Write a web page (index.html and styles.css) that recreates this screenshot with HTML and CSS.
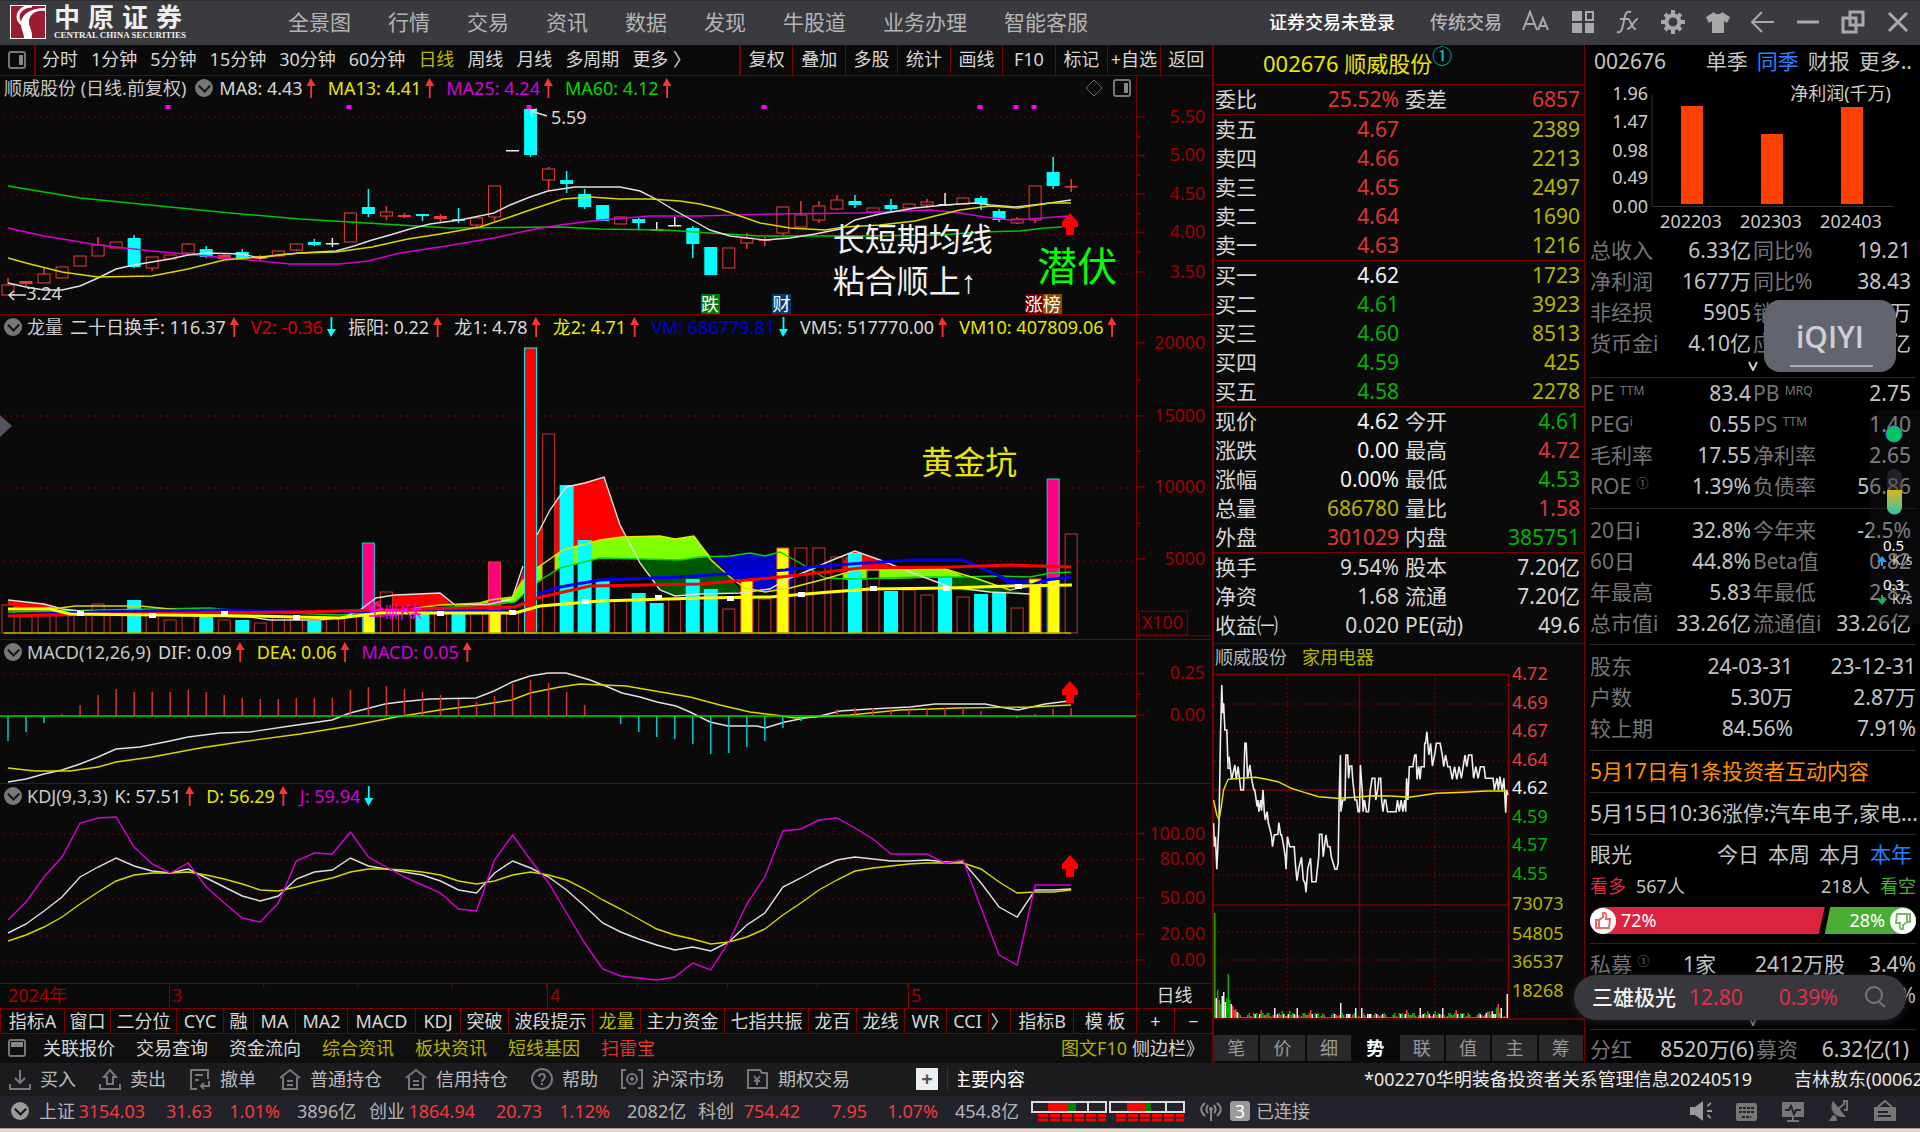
FILE: index.html
```html
<!DOCTYPE html>
<html lang="zh-CN">
<head>
<meta charset="utf-8">
<title>中原证券 - 顺威股份</title>
<link rel="stylesheet" href="styles.css">
</head>
<body>
<header class="titlebar">
  <a class="brand" href="#">
    <svg class="brand-mark" viewBox="0 0 36 34"><rect width="36" height="34" fill="#fff"/><rect x="1" y="1" width="34" height="32" fill="#9b1c2e"/><path d="M35 6C25 5 19 10 19 17c0 6 4 9 3 16h-8c0-5-3-8-3-14C11 10 20 3 35 3z" fill="#fff"/><path d="M22 1C14 1 8 6 8 12c0 4 2 5 4 7" stroke="#fff" stroke-width="3" fill="none"/></svg>
    <span class="brand-text"><span class="brand-cn"><b>中</b><b>原</b><b>证</b><b>券</b></span><span class="brand-en">CENTRAL CHINA SECURITIES</span></span>
  </a>
  <nav class="mainnav">
    <a href="#">全景图</a><a href="#">行情</a><a href="#">交易</a><a href="#">资讯</a><a href="#">数据</a><a href="#">发现</a><a href="#">牛股道</a><a href="#">业务办理</a><a href="#">智能客服</a>
  </nav>
  <div class="login"><a class="on" href="#">证券交易未登录</a><a href="#">传统交易</a></div>
  <div class="tools">
    <button aria-label="字体"><svg viewBox="0 0 28 24"><path d="M1 20L8 2l7 18M3.500 14h9M16 20l5-12 5 12M18 16h6" class="s2"/></svg></button>
    <button aria-label="布局"><svg viewBox="0 0 24 24"><path d="M1 1h10v10H1zM1 13h10v10H1zM14 13h9v10h-9z" class="f"/><path d="M15 2h7v8h-7z" class="s2"/></svg></button>
    <button aria-label="公式"><svg viewBox="0 0 24 24"><path d="M1 22c4 1 5-2 6-7l2-9c1-4 3-5 6-4M4 9h8M12 9c3 0 3 10 8 10M22 9c-4 0-6 10-11 10" class="s2"/></svg></button>
    <button aria-label="设置"><svg viewBox="0 0 24 24"><circle cx="12" cy="12" r="6.500" fill="none" stroke="#a9a9ac" stroke-width="4"/><path d="M12 0v5M12 19v5M0 12h5M19 12h5M4 4l3 3M17 17l3 3M4 20l3-3M17 7l3-3" stroke="#a9a9ac" stroke-width="4"/></svg></button>
    <button aria-label="皮肤"><svg viewBox="0 0 24 24"><path d="M8 2c1 3 7 3 8 0l8 5-3 6-3-2v12H6V11l-3 2-3-6z" class="f"/></svg></button>
    <button aria-label="后退"><svg viewBox="0 0 24 24"><path d="M23 12H2M11 2L1 12l10 10" class="s2"/></svg></button>
    <button aria-label="最小化"><svg viewBox="0 0 24 24"><path d="M1 12h22" class="s3"/></svg></button>
    <button aria-label="还原"><svg viewBox="0 0 24 24"><path d="M9 2h13v13H9zM2 8h13v14H2z" class="s3"/></svg></button>
    <button aria-label="关闭"><svg viewBox="0 0 24 24"><path d="M3 3l18 18M21 3L3 21" class="s3"/></svg></button>
  </div>
</header>

<main class="workspace">
  <section class="charts">
    <div class="periods">
      <button class="dock" aria-label="侧栏"><svg viewBox="0 0 18 18"><rect x="1" y="1" width="16" height="16" rx="2" fill="none" stroke="#777" stroke-width="2"/><rect x="11" y="4" width="4" height="10" fill="#888"/></svg></button>
      <nav class="period-list">
        <a href="#">分时</a><a href="#">1分钟</a><a href="#">5分钟</a><a href="#">15分钟</a><a href="#">30分钟</a><a href="#">60分钟</a><a class="active" href="#">日线</a><a href="#">周线</a><a href="#">月线</a><a href="#">多周期</a><a href="#">更多&nbsp;〉</a>
      </nav>
      <div class="period-tools">
        <button>复权</button><button>叠加</button><button>多股</button><button>统计</button><button>画线</button><button>F10</button><button>标记</button><button>+自选</button><button>返回</button>
      </div>
    </div>

    <section class="pane">
      <div class="legend">
        <span class="name">顺威股份 (日线.前复权)</span><i class="fold"></i>
        <span class="up">MA8: 4.43</span><span class="up y">MA13: 4.41</span><span class="up m">MA25: 4.24</span><span class="up g">MA60: 4.12</span>
        <svg class="pane-tools" viewBox="0 0 46 20"><path d="M8 2l8 8-8 8-8-8z" fill="none" stroke="#666"/><rect x="28" y="2" width="16" height="16" rx="2" fill="none" stroke="#777" stroke-width="2"/><rect x="38" y="5" width="4" height="10" fill="#888"/></svg>
      </div>
      <div class="plot">
        <svg id="price" class="price" viewBox="0 103 1136 211" preserveAspectRatio="none"></svg>
        <span class="note peak">5.59</span><span class="note low">3.24</span>
        <p class="note remark">长短期均线<br>粘合顺上<span class="sign">↑</span></p>
        <span class="note lurk">潜伏</span>
        <span class="badge b1">跌</span><span class="badge b2">财</span><span class="badge b3">涨</span><span class="badge b4">榜</span>
      </div>
      <svg id="price-axis" class="axis" viewBox="1136 77 76 238"></svg>
    </section>

    <section class="pane">
      <div class="legend">
        <i class="fold"></i><span class="name">龙量</span>
        <span class="up">二十日换手: 116.37</span><span class="down r">V2: -0.36</span><span class="up">振阳: 0.22</span><span class="up">龙1: 4.78</span><span class="up y">龙2: 4.71</span><span class="down b">VM: 686779.81</span><span class="up">VM5: 517770.00</span><span class="up y">VM10: 407809.06</span>
      </div>
      <div class="plot">
        <svg id="volume" class="volume" viewBox="0 342 1136 297" preserveAspectRatio="none"></svg>
        <span class="note pit">黄金坑</span>
        <button class="drawer" aria-label="展开"></button>
      </div>
      <svg id="volume-axis" class="axis" viewBox="1136 316 76 324"></svg>
    </section>

    <section class="pane">
      <div class="legend">
        <i class="fold"></i><span class="name">MACD(12,26,9)</span>
        <span class="up">DIF: 0.09</span><span class="up y">DEA: 0.06</span><span class="up m">MACD: 0.05</span>
      </div>
      <div class="plot"><svg id="macd" class="macd" viewBox="0 667 1136 116" preserveAspectRatio="none"></svg></div>
      <svg id="macd-axis" class="axis" viewBox="1136 641 76 143"></svg>
    </section>

    <section class="pane">
      <div class="legend">
        <i class="fold"></i><span class="name">KDJ(9,3,3)</span>
        <span class="up">K: 57.51</span><span class="up y">D: 56.29</span><span class="down m">J: 59.94</span>
      </div>
      <div class="plot"><svg id="kdj" class="kdj" viewBox="0 811 1136 172" preserveAspectRatio="none"></svg></div>
      <svg id="kdj-axis" class="axis" viewBox="1136 785 76 199"></svg>
    </section>

    <div class="dates"><span>2024年</span><span class="ticks">3</span><span class="ticks">4</span><span>5</span><span class="unit">日线</span></div>

    <div class="indicators">
      <button>指标A</button><button>窗口</button><button>二分位</button><button>CYC</button><button>融</button><button>MA</button><button>MA2</button><button>MACD</button><button>KDJ</button><button>突破</button><button>波段提示</button><button class="active">龙量</button><button>主力资金</button><button>七指共振</button><button>龙百</button><button>龙线</button><button>WR</button><button>CCI</button><button>〉</button><button>指标B</button><button>模 板</button><button>+</button><button>−</button>
    </div>

    <nav class="links">
      <svg viewBox="0 0 18 18"><rect x="1" y="1" width="16" height="16" rx="2" fill="none" stroke="#777" stroke-width="2"/><rect x="3" y="3" width="12" height="5" fill="#888"/></svg>
      <a href="#">关联报价</a><a href="#">交易查询</a><a href="#">资金流向</a><a class="olive" href="#">综合资讯</a><a class="olive" href="#">板块资讯</a><a class="olive" href="#">短线基因</a><a class="warn" href="#">扫雷宝</a>
      <span class="links-end"><a class="olive" href="#">图文F10</a><a href="#">侧边栏》</a></span>
    </nav>
  </section>

  <section class="quote">
    <h1>002676 顺威股份<sup>①</sup></h1>
    <table><tr><th>委比</th><td class="r">25.52%</td><th>委差</th><td class="r">6857</td></tr></table>
    <table>
      <tr><th>卖五</th><td class="r">4.67</td><th></th><td class="o">2389</td></tr>
      <tr><th>卖四</th><td class="r">4.66</td><th></th><td class="o">2213</td></tr>
      <tr><th>卖三</th><td class="r">4.65</td><th></th><td class="o">2497</td></tr>
      <tr><th>卖二</th><td class="r">4.64</td><th></th><td class="o">1690</td></tr>
      <tr><th>卖一</th><td class="r">4.63</td><th></th><td class="o">1216</td></tr>
    </table>
    <table>
      <tr><th>买一</th><td class="w">4.62</td><th></th><td class="o">1723</td></tr>
      <tr><th>买二</th><td class="g">4.61</td><th></th><td class="o">3923</td></tr>
      <tr><th>买三</th><td class="g">4.60</td><th></th><td class="o">8513</td></tr>
      <tr><th>买四</th><td class="g">4.59</td><th></th><td class="o">425</td></tr>
      <tr><th>买五</th><td class="g">4.58</td><th></th><td class="o">2278</td></tr>
    </table>
    <table>
      <tr><th>现价</th><td class="w">4.62</td><th>今开</th><td class="g">4.61</td></tr>
      <tr><th>涨跌</th><td class="w">0.00</td><th>最高</th><td class="r">4.72</td></tr>
      <tr><th>涨幅</th><td class="w">0.00%</td><th>最低</th><td class="g">4.53</td></tr>
      <tr><th>总量</th><td class="o">686780</td><th>量比</th><td class="r">1.58</td></tr>
      <tr><th>外盘</th><td class="r">301029</td><th>内盘</th><td class="g">385751</td></tr>
    </table>
    <table class="last">
      <tr><th>换手</th><td>9.54%</td><th>股本</th><td>7.20亿</td></tr>
      <tr><th>净资</th><td>1.68</td><th>流通</th><td>7.20亿</td></tr>
      <tr><th>收益㈠</th><td>0.020</td><th>PE(动)</th><td>49.6</td></tr>
    </table>
    <div class="mini-title"><span>顺威股份</span><a href="#">家用电器</a></div>
    <svg id="mini" class="mini" viewBox="1214 674 370 346"></svg>
    <div class="mini-tabs">
      <button>笔</button><button>价</button><button>细</button><button class="active">势</button><button>联</button><button>值</button><button>主</button><button>筹</button>
    </div>
  </section>

  <aside class="fund">
    <div class="fund-head"><span>002676</span><a href="#">单季</a><a class="active" href="#">同季</a><a href="#">财报</a><a href="#">更多..</a></div>
    <svg id="profit" class="profit" viewBox="1585 79 335 156"></svg>
    <div class="block first">
      <dl><dt>总收入</dt><dd>6.33亿</dd><dt>同比%</dt><dd>19.21</dd></dl>
      <dl><dt>净利润</dt><dd>1677万</dd><dt>同比%</dt><dd>38.43</dd></dl>
      <dl><dt>非经损</dt><dd>5905</dd><dt>销</dt><dd>万</dd></dl>
      <dl><dt>货币金i</dt><dd>4.10亿</dd><dt>应</dt><dd>亿</dd></dl>
      <button class="more" aria-label="更多"><svg viewBox="0 0 10 10"><path d="M1 1l4 8 4-8" fill="none" stroke="#ccc" stroke-width="2"/></svg></button>
    </div>
    <div class="block">
      <dl><dt>PE <sup>TTM</sup></dt><dd>83.4</dd><dt>PB <sup>MRQ</sup></dt><dd>2.75</dd></dl>
      <dl><dt>PEG<sup>i</sup></dt><dd>0.55</dd><dt>PS <sup>TTM</sup></dt><dd>1.40</dd></dl>
      <dl><dt>毛利率</dt><dd>17.55</dd><dt>净利率</dt><dd>2.65</dd></dl>
      <dl><dt>ROE <sup>①</sup></dt><dd>1.39%</dd><dt>负债率</dt><dd>56.86</dd></dl>
    </div>
    <div class="block roomy">
      <dl><dt>20日i</dt><dd>32.8%</dd><dt>今年来</dt><dd>-2.5%</dd></dl>
      <dl><dt>60日</dt><dd>44.8%</dd><dt>Beta值</dt><dd>0.82</dd></dl>
      <dl><dt>年最高</dt><dd>5.83</dd><dt>年最低</dt><dd>2.85</dd></dl>
      <dl><dt>总市值i</dt><dd>33.26亿</dd><dt>流通值i</dt><dd>33.26亿</dd></dl>
    </div>
    <table class="holders">
      <tr><th>股东</th><td>24-03-31</td><td>23-12-31</td></tr>
      <tr><th>户数</th><td>5.30万</td><td>2.87万</td></tr>
      <tr><th>较上期</th><td>84.56%</td><td>7.91%</td></tr>
    </table>
    <a class="news hot" href="#">5月17日有1条投资者互动内容</a>
    <a class="news" href="#">5月15日10:36涨停:汽车电子,家电...</a>
    <div class="vote">
      <div class="vote-head"><span>眼光</span><a href="#">今日</a><a href="#">本周</a><a href="#">本月</a><a class="active" href="#">本年</a></div>
      <div class="vote-count"><span class="bull">看多</span><span>567人</span><span class="right">218人</span><span class="bear">看空</span></div>
      <div class="vote-bar">
        <div class="yes"><svg viewBox="0 0 26 26"><circle cx="13" cy="13" r="13" fill="#fff"/><path d="M6 12h3v8H6zM9 12l4-3V5c3-1 4 2 3 6h4l-1 9H9" fill="none" stroke="#e26a6a" stroke-width="2"/></svg>72%</div>
        <div class="no">28%<svg viewBox="0 0 26 26"><circle cx="13" cy="13" r="13" fill="#fff"/><path d="M20 14h-3V6h3zM17 14l-4 3v4c-3 1-4-2-3-6H6l1-9h10" fill="none" stroke="#7cb56a" stroke-width="2"/></svg></div>
      </div>
    </div>
    <div class="funds">
      <div class="fund-row"><span class="dim">私募 <sup>①</sup></span><span>1家</span><span>2412万股</span><span>3.4%</span></div>
      <div class="fund-row rest"><span>%</span></div>
      <button class="more" aria-label="更多"><svg viewBox="0 0 10 10"><path d="M1 1l4 8 4-8" fill="none" stroke="#999" stroke-width="2"/></svg></button>
    </div>
    <div class="block bonus"><dl><dt>分红</dt><dd>8520万(6)</dd><dt>募资</dt><dd>6.32亿(1)</dd></dl></div>

    <div class="iqiyi"><span>iQIYI</span></div>
    <div class="netmon">
      <svg viewBox="0 0 51 214"><circle cx="25" cy="24" r="8" fill="#00c462" stroke="#2a8fc0"/><defs><linearGradient id="cap" x1="0" y1="0" x2="0" y2="1"><stop offset="0" stop-color="#d9b51c"/><stop offset="1" stop-color="#2cc6b0"/></linearGradient></defs><rect x="18" y="59" width="15" height="45" rx="7" fill="#3a3b40" fill-opacity=".5"/><path d="M18 80h15v17a7 7 0 0 1-15 0z" fill="url(#cap)"/><path d="M13 146l5 6h-4v4h-2v-4H8z" fill="#1ea0ff"/><path d="M13 195l5-6h-4v-4h-2v4H8z" fill="#10b860"/></svg>
      <span class="rate up1">0.5</span><span class="rate up2">K/s</span><span class="rate dn1">0.3</span><span class="rate dn2">K/s</span>
    </div>
    <a class="ticker" href="#"><b>三雄极光</b><span>12.80</span><span>0.39%</span><svg viewBox="0 0 22 22"><circle cx="10" cy="9" r="8" fill="none" stroke="#77767c" stroke-width="2"/><path d="M15 16l6 5" stroke="#77767c" stroke-width="2"/></svg></a>
  </aside>
</main>

<footer>
  <div class="actions">
    <button><svg viewBox="0 0 22 22"><path d="M1 16v5h20v-5M11 2v12M6 10l5 5 5-5"/></svg>买入</button>
    <button><svg viewBox="0 0 22 22"><path d="M1 16v5h20v-5M8 16V9H5l6-7 6 7h-3v7z"/></svg>卖出</button>
    <button><svg viewBox="0 0 22 22"><path d="M8 21H2V2h17v9M6 7h8M6 12h4M20 13v5h-8M15 15l-3 3 3 3"/></svg>撤单</button>
    <button><svg viewBox="0 0 22 22"><path d="M1 10L11 2l10 8M4 9v12h14V9M8 13h6M8 17h6"/></svg>普通持仓</button>
    <button><svg viewBox="0 0 22 22"><path d="M1 10L11 2l10 8M4 9v12h14V9M8 13h6M8 17h6"/></svg>信用持仓</button>
    <button><svg viewBox="0 0 22 22"><circle cx="11" cy="11" r="10"/><path d="M8 9c0-4 6-4 6 0 0 2-3 2-3 5M11 15v2"/></svg>帮助</button>
    <button><svg viewBox="0 0 22 22"><path d="M5 2H1v18h4M17 2h4v18h-4"/><circle cx="11" cy="11" r="5"/><path d="M9 11h4M11 9v4"/></svg>沪深市场</button>
    <button><svg viewBox="0 0 22 22"><path d="M1 2h12l2 3h5v15H1zM7 8l3 4 3-4M10 12v5M7 13h6"/></svg>期权交易</button>
    <button class="plus" aria-label="添加">+</button>
    <span class="main-topic"><span>主要内容</span></span>
    <span class="marquee"><a href="#">*002270华明装备投资者关系管理信息20240519</a><a href="#">吉林敖东(000623)</a></span>
  </div>
  <div class="status">
    <i class="fold"></i>
    <div class="indices">
      <span>上证</span><b>3154.03</b><b>31.63</b><b>1.01%</b><span>3896亿</span>
      <span>创业</span><b>1864.94</b><b>20.73</b><b>1.12%</b><span>2082亿</span>
      <span>科创</span><b>754.42</b><b>7.95</b><b>1.07%</b><span>454.8亿</span>
    </div>
    <svg class="meters" viewBox="0 0 154 22"><g fill="none" stroke="#ddd" stroke-width="2"><rect x="1" y="2" width="74" height="10"/><rect x="79" y="2" width="74" height="10"/><path d="M57 2v10M135 2v10"/></g><path d="M17 3h20v8H17zM96 3h19v8H96z" fill="#f00"/><path d="M37 3h8v8h-8zM115 3h5v8h-5z" fill="#008000"/><path d="M7 15.500h68M7 20h68M85 15.500h68M85 20h68" stroke="#f00" stroke-width="3" stroke-dasharray="10 2"/></svg>
    <svg class="antenna" viewBox="0 0 22 22"><path d="M11 9v12M5 3c-5 4-5 9 0 13M17 3c5 4 5 9 0 13M8 5c-2 3-2 6 0 8M14 5c2 3 2 6 0 8" fill="none" stroke="#888" stroke-width="2"/><circle cx="11" cy="9" r="2" fill="#888"/></svg>
    <span class="count">3</span><span>已连接</span>
    <div class="tray">
      <svg viewBox="0 0 24 22"><path d="M1 7h5l8-6v20l-8-6H1zM18 5l4-3v2l-3 3zM18 10h5v2h-5zM18 16l4 3v-2l-3-3z" fill="#999"/></svg>
      <svg viewBox="0 0 24 22"><rect x="1" y="3" width="21" height="18" rx="2" fill="#777"/><path d="M4 8h15M4 12h15M7 17h9" stroke="#22222a" stroke-width="2" stroke-dasharray="3 1"/></svg>
      <svg viewBox="0 0 24 22"><rect x="1" y="2" width="22" height="15" fill="#777"/><path d="M12 17v4M6 21h12" stroke="#777" stroke-width="2"/><path d="M4 10h4l2-4 3 8 2-4h5" stroke="#22222a" stroke-width="2" fill="none"/></svg>
      <svg viewBox="0 0 24 22"><path d="M6 1c-4 7 0 17 13 16zM6 15l-4 6h8l-1-5z" fill="#777"/><path d="M11 9l6-5v-3h3v9h-3" stroke="#777" stroke-width="2" fill="none"/></svg>
      <svg viewBox="0 0 24 22"><path d="M1 7h22v14H1z" fill="#777"/><path d="M5 7l7-6 7 6" stroke="#777" stroke-width="2" fill="none"/><path d="M5 12h10M5 16h13" stroke="#22222a" stroke-width="2"/></svg>
    </div>
  </div>
</footer>
<script src="charts.js"></script>
</body>
</html>
```
FILE: styles.css
```css
* { box-sizing: border-box; }
body {
  margin: 0;
  min-height: 100vh;
  background: #e8d9cc;
  color: #d6d6d6;
  font: 18px/24px "Noto Sans", "Noto Sans CJK SC", sans-serif;
  white-space: nowrap;
  overflow-x: hidden;
}
a { color: inherit; text-decoration: none; }
button { margin: 0; padding: 0; border: 0; background: none; color: inherit; font: inherit; white-space: nowrap; }
svg { display: block; }
sup { font-size: 12px; line-height: 1px; vertical-align: 6px; }
p, h1, dl, dd { margin: 0; }

.titlebar { display: flex; align-items: center; height: 45px; padding: 0 10px 2px; background: #3b3a3f; color: #b4b4b6; border-top: 1px solid #2c2b2f; }
.brand { display: flex; width: 278px; gap: 8px; color: #eee; }
.brand-mark { width: 36px; height: 34px; }
.brand-text { display: flex; flex-direction: column; width: 128px; }
.brand-cn { display: flex; justify-content: space-between; font-size: 26px; line-height: 25px; }
.brand-en { font: bold 9px/10px "Liberation Serif", serif; }
.mainnav { display: flex; gap: 37px; font-size: 21px; }
.login { display: flex; gap: 35px; margin-left: auto; margin-right: 20px; font-weight: 500; }
.login .on { color: #fff; }
.tools { display: flex; gap: 21px; }
.tools svg { width: 24px; height: 24px; }
.tools button:first-child svg { width: 28px; }
.tools .f { fill: #a9a9ac; }
.tools .s2 { fill: none; stroke: #a9a9ac; stroke-width: 2; }
.tools .s3 { fill: none; stroke: #a9a9ac; stroke-width: 3; }

.workspace { display: grid; grid-template-columns: minmax(0, 1fr) 373px 335px; background: #0a0a0a; }

.periods { display: flex; height: 31px; border-bottom: 1px solid #7a0000; }
.dock { width: 36px; padding-left: 8px; border-right: 2px solid #7a0000; }
.dock svg { width: 18px; }
.period-list { display: flex; flex: 1; gap: 13px; align-items: center; padding: 0 0 2px 6px; }
.active { color: #b9b900; }
.period-tools { display: grid; grid-template-columns: repeat(9, 1fr); width: 473px; border-left: 1px solid #7a0000; }
.period-tools button { padding-bottom: 2px; border-left: 1px solid #7a0000; }

.pane { display: grid; grid-template-columns: minmax(0, 1fr) 76px; border-bottom: 1px solid #7a0000; }
.pane .legend { grid-column: 1; }
.pane .plot { grid-column: 1; position: relative; }
.pane .axis { grid-column: 2; grid-row: 1 / 3; width: 76px; height: 100%; border-left: 1px solid #7a0000; }
.legend { display: flex; align-items: center; height: 27px; padding: 0 4px 3px; }
.fold { width: 18px; height: 18px; border-radius: 50%; background: #777; display: grid; place-items: center; }
.fold::after { content: ""; width: 7px; height: 7px; border: solid #111; border-width: 0 2px 2px 0; transform: translateY(-2px) rotate(45deg); }
.legend .name { color: #c8c8c8; }
.legend .fold:first-child { margin-right: 5px; }
.legend .fold:first-child + .name { margin-right: 7px; }
.legend .name:first-child { margin-right: 9px; }
.legend .name + .fold { margin-right: 6px; }
.up, .down { display: flex; align-items: center; margin-right: 12px; }
.up::after, .down::after { content: ""; width: 9px; height: 20px; margin-left: 4px; background: #ff3232; clip-path: polygon(45% 0, 100% 40%, 60% 40%, 60% 100%, 40% 100%, 40% 40%, 0 40%); }
.down::after { background: #0ff; clip-path: polygon(45% 100%, 100% 60%, 60% 60%, 60% 0, 40% 0, 40% 60%, 0 60%); }
.legend .y { color: #e6e600; }
.legend .m { color: #d800d8; }
.legend .g { color: #00d800; }
.legend .b { color: #0000d8; }
.legend .r { color: #d80000; }
.pane-tools { width: 46px; height: 20px; margin-left: auto; }
.plot > svg { width: 100%; }
.price { height: 211px; }
.volume { height: 297px; }
.macd { height: 116px; }
.kdj { height: 172px; }
.note { position: absolute; }
.peak { left: 48.5%; top: 2px; }
.low { left: 2.3%; top: 178px; }
.remark { left: 73.3%; top: 115px; font-size: 32px; line-height: 42px; color: #f0f0f0; }
.sign { font-family: "Liberation Sans", sans-serif; }
.lurk { left: 91.3%; top: 138px; font-size: 40px; line-height: 50px; color: #0f0; }
.pit { left: 81.1%; top: 99px; font-size: 32px; line-height: 42px; color: #e6e600; }
.badge { position: absolute; top: 191px; width: 19px; height: 20px; font-size: 18px; line-height: 20px; color: #fff; }
.b1 { left: 61.7%; background: #007a00; }
.b2 { left: 68%; background: #063a70; }
.b3 { left: 90.2%; background: #700000; }
.b4 { left: 91.8%; background: #8a4800; }
.drawer { position: absolute; left: 0; top: 73px; width: 12px; height: 22px; background: #55545c; clip-path: polygon(0 0, 100% 50%, 0 100%); }

.dates { display: grid; grid-template-columns: 169fr 378fr 361fr 228fr 76px; height: 24px; line-height: 22px; color: #a80000; }
.dates span { border-left: 1px solid #7a0000; padding-left: 2px; }
.dates span:first-child { padding-left: 8px; border: 0; }
.dates .ticks { background: linear-gradient(to right, #7a0000 1px, transparent 1px) -1px 0 / 25% 4px repeat-x; }
.dates .unit { padding: 0; text-align: center; color: #d6d6d6; }

.indicators { display: grid; grid-template-columns: 64fr 46fr 66fr 47fr 30fr 42fr 52fr 68fr 45fr 48fr 84fr 48fr 84fr 84fr 48fr 48fr 42fr 42fr 22fr 63fr 63fr 38fr 38fr; height: 26px; border: solid #7a0000; border-width: 1px 0; }
.indicators button { overflow: hidden; border-left: 1px solid #7a0000; line-height: 22px; }
.links { display: flex; align-items: center; gap: 21px; height: 29px; padding: 0 8px 2px; background: #0f0f10; }
.links > svg { width: 18px; height: 18px; margin-right: -4px; }
.olive { color: #b4b400; }
.warn { color: #e83232; }
.links-end { display: flex; gap: 5px; margin-left: auto; }

.quote { display: flex; flex-direction: column; border: solid #7a0000; border-width: 0 1px 0 2px; font-size: 21px; }
.quote h1 { height: 39px; padding-left: 49px; font-size: 22px; line-height: 36px; font-weight: 400; color: #e6e600; }
.quote h1 sup { color: #00c8c8; font-size: 20px; vertical-align: 8px; }
.quote table { width: 100%; table-layout: fixed; border-collapse: separate; border-spacing: 0; border-top: 1px solid #7a0000; line-height: 29px; }
.quote table.last { padding-bottom: 3px; }
.quote th, .quote td { padding: 0; font-weight: 400; }
.quote th { width: 80px; text-align: left; padding-left: 1px; }
.quote th:nth-child(3) { padding-left: 6px; }
.quote td { text-align: right; overflow: visible; }
.quote td:last-child { padding-right: 4px; }
.quote .r { color: #e03434; }
.quote .g { color: #00b400; }
.quote .o { color: #b4b400; }
.quote .w { color: #f4f4f4; }
.mini-title { display: flex; gap: 15px; height: 31px; padding-left: 1px; border-top: 1px solid #7a0000; font-size: 18px; line-height: 27px; color: #bbb; }
.mini-title a { color: #b4b400; }
.mini { width: 370px; height: 346px; overflow: visible; }
.mini-tabs { display: grid; grid-template-columns: repeat(8, 1fr); gap: 2px; margin-top: auto; padding: 0 1px 2px 0; font-size: 18px; }
.mini-tabs button { height: 26px; background: #29292c; color: #999; }
.mini-tabs .active { background: none; color: #fff; font-weight: 700; }

.fund { position: relative; display: flex; flex-direction: column; background: #000; font-size: 21px; padding: 0 4px 0 5px; color: #c4c4c4; }
.fund-head { display: flex; gap: 9px; padding: 0 4px 2px; line-height: 32px; }
.fund-head span, .vote-head span { margin-right: auto; }
.fund .active { color: #2a82ff; }
.profit { width: 335px; height: 156px; margin-left: -5px; }
.block { border-top: 1px solid #2a2a2a; padding-bottom: 6px; }
.block.first { border: 0; padding: 0; }
.block.roomy { padding: 6px 0 5px; }
.block dl { display: grid; grid-template-columns: 80px 81px 80px 80px; line-height: 31px; }
.block dt { color: #747474; }
.block dd { text-align: right; }
.block dt:nth-child(3) { padding-left: 2px; }
.more { display: block; width: 12px; margin: 2px 0 6px 158px; }
.more svg { width: 10px; height: 10px; }
.holders { border-top: 1px solid #2a2a2a; border-spacing: 0; padding: 6px 0; line-height: 31px; }
.holders th { width: 80px; padding: 0; text-align: left; font-weight: 400; color: #747474; }
.holders td { padding: 0; text-align: right; }
.news { height: 42px; line-height: 40px; border-top: 1px solid #2a2a2a; }
.hot { color: #ff9000; }
.vote { border-top: 1px solid #2a2a2a; padding-bottom: 9px; }
.vote-head { display: flex; gap: 9px; padding: 0 4px 1px 0; line-height: 39px; }
.vote-count { display: flex; gap: 10px; font-size: 18px; line-height: 23px; padding-bottom: 9px; }
.vote-count .right { margin-left: auto; }
.bull { color: #dc2844; }
.bear { color: #4aae34; }
.vote-bar { display: flex; height: 27px; font-size: 18px; line-height: 27px; color: #fff; }
.vote-bar div { display: flex; align-items: center; gap: 5px; }
.vote-bar svg { width: 26px; height: 26px; }
.yes { flex: 72; background: #dc2440; border-radius: 14px 0 0 14px; clip-path: polygon(0 0, 100% 0, 97.500% 100%, 0 100%); }
.no { flex: 28; justify-content: flex-end; background: #4aae34; border-radius: 0 14px 14px 0; clip-path: polygon(6% 0, 100% 0, 100% 100%, 0 100%); }
.funds { height: 86px; border-top: 1px solid #2a2a2a; padding-top: 5px; }
.fund-row { display: grid; grid-template-columns: 60px 66px 129px 71px; line-height: 31px; text-align: right; }
.fund-row .dim { text-align: left; color: #747474; }
.fund-row.rest { grid-template-columns: 1fr; }
.funds .more { margin-top: 5px; }
.bonus { padding: 4px 0 0; height: 34px; }
.block.bonus dl { grid-template-columns: 50px 114px 50px 105px; }

.iqiyi { position: absolute; right: 24px; top: 255px; width: 132px; height: 72px; border-radius: 16px; background: #62656d; text-align: center; color: #cfcfd3; font: 600 30px/74px "Open Sans", sans-serif; }
.iqiyi::after { content: ""; position: absolute; left: 26px; right: 23px; bottom: 5px; height: 2px; background: #aaacb2; }
.netmon { position: absolute; right: 0; top: 365px; width: 51px; height: 214px; border-radius: 12px 0 0 12px; background: rgba(20, 20, 24, .4); color: #fff; font-size: 15px; line-height: 18px; }
.netmon svg { width: 51px; height: 214px; }
.rate { position: absolute; left: 14px; }
.up1 { top: 126px; }
.up2, .dn2 { left: 23px; color: #ccc; font-size: 14px; }
.up2 { top: 141px; }
.dn1 { top: 165px; }
.dn2 { top: 180px; }
.ticker { position: absolute; right: 14px; bottom: 43px; width: 332px; height: 45px; display: flex; align-items: center; padding: 0 20px 2px 18px; border-radius: 23px; background: #38373d; box-shadow: 0 2px 8px #222; color: #e03048; }
.ticker b { color: #f2f2f2; font-weight: 500; margin-right: 13px; }
.ticker svg { width: 22px; height: 22px; margin-left: auto; }
.ticker span + span { margin-left: 36px; }

.actions { display: flex; align-items: center; height: 33px; padding: 0 0 2px 9px; background: #1c1c1e; color: #bbb; overflow: hidden; }
.actions button { display: flex; align-items: center; gap: 9px; margin-right: 23px; }
.actions svg { width: 22px; height: 22px; fill: none; stroke: #77777c; stroke-width: 2; }
.actions .plus { justify-content: center; width: 22px; height: 22px; margin: 0 9px 0 43px; background: #eee; color: #555; font-weight: 700; font-size: 20px; line-height: 20px; }
.main-topic { display: flex; justify-content: flex-end; width: 78px; border-left: 1px solid #333; color: #fff; }
.main-topic span { display: flex; justify-content: flex-end; width: 67px; overflow: hidden; }
.marquee { display: flex; gap: 42px; width: 556px; margin-left: auto; overflow: hidden; color: #e8e8e8; }
.status { display: flex; align-items: center; height: 33px; padding: 0 23px 2px 11px; background: #22222a; color: #b4b4b4; border-bottom: 1px solid #a89c94; }
.status .fold { background: #999; margin-right: 10px; }
.indices { display: grid; grid-template-columns: 36px 70px 67px 68px 89px 36px 70px 67px 68px 88px 36px 66px 67px 71px 85px; }
.indices b { color: #f03c3c; font-weight: 400; text-align: right; }
.indices span:not(:nth-child(5n+1)) { padding-left: 17px; }
.meters { width: 154px; height: 22px; margin-left: 8px; }
.antenna { width: 22px; height: 22px; margin: 0 8px 0 15px; }
.count { width: 20px; height: 20px; margin-right: 6px; border-radius: 3px; background: #999; color: #fff; line-height: 20px; text-align: center; }
.tray { display: flex; gap: 22px; margin-left: auto; }
.tray svg { width: 24px; height: 22px; }
```
FILE: charts.js
```js
// Positions are in the shared canvas units of the svg view boxes.
const STEP = 18.02, FIRST = 8, BG = '#0a0a0a', LINE = '#7a0000';
const RED = '#e83c3c', CYAN = '#00ffff';
const X = i => FIRST + STEP * i;
const put = (id, s) => { document.getElementById(id).innerHTML = s; };
const rect = (x, y, w, h, fill, stroke) =>
  `<rect x="${x}" y="${y}" width="${w}" height="${h}" fill="${fill}"${stroke ? ` stroke="${stroke}"` : ''}/>`;
const line = (x1, y1, x2, y2, c, w = 1, dash = '') =>
  `<path d="M${x1} ${y1}L${x2} ${y2}" stroke="${c}" stroke-width="${w}"${dash ? ` stroke-dasharray="${dash}"` : ''}/>`;
const poly = (pts, c, w = 1.4) => `<polyline points="${pts}" fill="none" stroke="${c}" stroke-width="${w}"/>`;
const area = (pts, c) => `<polygon points="${pts}" fill="${c}"/>`;
const series = (ys, c) => poly(ys.map((y, i) => `${X(i)},${y}`).join(' '), c);
const text = (x, y, s, c, anchor = 'start') =>
  `<text x="${x}" y="${y + 6}" fill="${c}" font-size="18" text-anchor="${anchor}">${s}</text>`;
const grid = ys => ys.map(y => line(4, y, 1134, y, LINE, 1.5, '1.5 4.5')).join('');
const arrow = y => `<path d="M1070 ${y}l8 9v5h-4v8h-8v-8h-4v-5z" fill="#f00"/>`;
const axis = (id, labels, minor) => put(id,
  labels.map(([y, s]) => line(1136, y, 1144, y, LINE, 1.5) + text(1205, y, s, '#a00000', 'end')).join('') +
  minor.map(y => line(1136, y, 1140, y, LINE, 1.5)).join(''));

// r hollow rise, R thin rise, c fall, w unchanged: [kind, body top, body bottom, high, low]
const candles = [
  ['r',285,295,278,295],['R',281,284,281,286],['r',274,283,267,283],['r',267,278,267,278],['r',256,266,256,266],
  ['r',245,256,237,256],['r',242,248,242,248],['c',238,267,235,268],['r',257,268,257,271],['r',255,259,255,259],
  ['r',244,253,243,255],['c',249,257,246,258],['R',255,259,253,259],['c',252,258,249,259],['R',256,259,255,261],
  ['r',251,256,251,257],['r',244,250,244,251],['c',242,245,239,246],['w',243,244,238,247],['r',213,242,213,242],
  ['c',207,214,189,217],['r',212,216,206,220],['R',215,217,213,218],['c',214,216,214,221],['R',216,219,214,222],
  ['c',219,221,208,223],['r',218,225,217,227],['r',186,217,186,221],['w',150,151,150,151],['c',109,155,109,157],
  ['r',169,180,167,191],['c',180,184,171,193],['c',194,207,189,209],['c',205,221,205,221],['r',217,224,217,224],
  ['c',219,223,218,230],['w',229,230,222,230],['w',225,226,217,226],['c',228,244,226,258],['c',247,275,247,275],
  ['r',248,268,248,268],['r',238,243,233,249],['R',239,241,237,246],['r',207,233,207,235],['r',215,227,201,227],
  ['r',206,220,201,223],['r',200,209,195,210],['c',201,205,195,208],['r',208,212,208,212],['c',205,209,199,211],
  ['r',204,208,204,208],['r',202,205,199,208],['w',204,205,193,206],['r',198,204,198,205],['c',198,204,196,210],
  ['c',211,220,209,222],['r',219,223,217,224],['r',186,220,186,223],['c',172,186,157,189],['R',186,187,179,192]];
let s = grid([117, 156, 195, 234, 274]);
candles.forEach(([k, t, b, h, l], i) => {
  const x = X(i), c = k === 'c' ? CYAN : k === 'w' ? '#eee' : RED;
  if (k === 'r') {
    s += line(x, h, x, t, c, 1.5) + line(x, b, x, l, c, 1.5) + rect(x - 6, t, 12, b - t, 'none', c);
  } else {
    s += line(x, h, x, l, c, 1.5) + rect(x - 6.5, t, 13, Math.max(b - t, 1.5), c);
  }
});
s += poly('8,186 44,192 80,198 130,203 180,208 230,213 300,219 350,222 450,228 560,227 600,229 665,230 710,233 760,236 860,236 940,235 980,232 1020,231 1045,228 1062,227', '#00c800');
s += poly('8,228 44,236 98,245 152,251 206,256 250,260 290,264 340,264 368,261 400,253 440,247 494,238 530,230 560,225 600,220 650,216 700,216 770,214 860,213 930,210 960,213 985,217 1010,220 1030,219 1055,217 1069,216', '#d800d8');
s += poly('8,283 26,287 44,290 62,290 80,286 98,278 116,269 134,265 152,262 170,259 188,255 206,253 242,254 260,258 278,255 300,253 336,251 354,246 372,240 390,235 410,229 430,224 460,220 494,213 510,205 530,197 548,191 575,187 620,187 640,191 656,199 674,210 692,220 710,230 730,236 765,240 790,238 815,234 840,229 855,220 880,214 915,208 945,205 975,203 990,205 1015,207 1050,203 1071,200', '#e0e0e0');
s += poly('8,258 26,263 62,272 98,277 152,276 188,269 224,260 270,256 300,253 336,252 372,247 408,239 440,234 480,227 510,217 530,210 563,199 590,197 620,199 650,199 680,201 700,204 720,209 740,216 760,223 790,228 825,230 845,227 880,225 915,221 935,216 960,210 990,206 1018,208 1050,203 1071,203', '#d8d800');
s += [168, 349, 529, 764, 980, 1016, 1034].map(x => rect(x - 2.5, 105, 5, 4, '#ff00ff')).join('');
s += '<path d="M547 116l-16-5m6-2l-6 2 1 6M26 295H9m5-4l-5 4 5 5" fill="none" stroke="#ddd" stroke-width="1.5"/>' + arrow(213);
put('price', s);
axis('price-axis', [[117, '5.50'], [156, '5.00'], [195, '4.50'], [234, '4.00'], [274, '3.50']], [137, 176, 215, 254]);

// volume bars: kind and top; y strong day, p and q limit-up days, d record day
const bars = 'r605 r615 r612 r614 r614 r604 r615 c600 r615 r620 r614 c615 r620 c620 r623 r617 r617 c621 r619 r615 p543 r592 r612 c611 r612 c611 r612 q562 r612 d348 r434 c485 c540 c580 r600 c593 c603 r600 c579 c589 r609 y580 r599 y548 r548 r548 r557 c553 r567 c591 r590 r595 c577 r597 c594 c592 r608 y579 p479 r534'.split(' ');
s = grid([416, 488, 561]);
s += area('8,601 44,604 62,609 8,609', '#f00') + area('368,604 395,595 440,593 453,606 370,607', '#f00');
s += area('512,600 520,580 530,550 550,510 566,487 604,477 620,525 626,537 600,540 563,550 540,565 525,578', '#f00');
s += area('470,604 512,597 525,577 540,565 563,550 600,540 622,537 660,536 675,539 694,536 711,557 680,560 600,558 560,568 530,588 515,602', '#80ff00');
s += area('638,560 680,560 711,557 730,577 742,592 675,596 658,588', '#005800');
s += area('711,557 730,556 750,553 765,556 780,552 797,570 790,588 765,592 745,588 732,577', '#0000c8');
s += area('840,570 846,557 855,551 870,557 885,562 893,569', '#f00') + area('828,578 858,570 948,569 965,577 850,580', '#80ff00');
s += area('940,579 975,577 1010,590 1030,594 990,592 955,590', '#005800') + area('1000,578 1050,580 1045,590 1012,588', '#0000c8');
bars.forEach((v, i) => {
  const k = v[0], t = +v.slice(1), x = X(i) - 6, h = 633 - t;
  if (k === 'r') s += rect(x, t, 12, h, BG, '#c83232');
  if (k === 'c') s += rect(x - 1, t, 14, h, CYAN);
  if (k === 'y') s += rect(x, t, 12, h, '#ff0', RED);
  if (k === 'd') s += rect(x, t, 12, h, '#f00', CYAN);
  if (k === 'p' || k === 'q') {
    const low = t === 479 ? 580 : 612;
    s += rect(x, t, 12, h, '#ff0080', k === 'p' ? '#20c8d8' : RED) + rect(x + 1, low, 11, 633 - low, '#ff0');
  }
});
s += poly('8,612 100,610 210,608 240,611 340,615 400,610 490,605 515,602 523,595', '#00d800');
s += poly('537,582 560,568 600,558 680,560 700,557 730,556 750,553 765,556 780,552 800,563 825,578 855,579 920,577 960,577 1000,576 1030,577 1050,573 1071,572', '#00d800');
s += poly('8,600 26,602 44,604 62,609 80,611 150,614 250,617 270,620 320,620 345,617 360,610 376,598 395,595 440,593 455,605 490,604 512,599 523,566', '#e0e0e0');
s += poly('537,535 550,510 566,487 585,483 604,477 620,525 640,563 660,590 675,596 700,594 740,593 770,589 785,580 810,570 830,561 855,551 880,560 910,572 950,587 990,592 1030,594', '#e0e0e0');
s += poly('8,609 60,608 75,606 140,606 200,612 360,612 400,610 440,605 480,603 490,600 512,597 523,580', '#d8d800');
s += poly('537,568 563,550 600,540 622,537 660,536 675,539 694,536 711,560 730,577 745,588 765,592 790,588 825,579 855,570 945,569 975,578 1010,590 1030,586', '#e6e600');
s += poly('8,615 100,612 225,610 300,612 500,611 515,606 523,603', '#0000f0', 3) + poly('537,594 560,587 600,580 680,577 740,573 785,570 810,567 865,563 910,560 963,560 990,572 1018,584 1032,585 1045,580 1071,577', '#0000f0', 3);
s += poly('8,616 100,614 300,612 515,607 537,598 590,586 700,584 770,578 800,575 860,568 950,567 1010,565 1071,567', '#f00', 3);
s += poly('8,609 50,609 70,614 250,616 340,618 380,613 515,613 540,606 600,601 700,598 770,597 830,592 870,589 950,588 1010,586 1072,585', '#ff0', 3);
s += [[80,613],[152,615],[224,613],[296,617],[440,613],[512,612],[585,601],[658,597],[730,598],[801,594],[873,588],[946,588],[1018,586]].map(([x, y]) => rect(x - 3, y - 2, 7, 5, '#fff')).join('');
s += '<path d="M369 610l8-7 6 7m-14 6h16m-14-4l10-4m-12 2h14m-8-3v10m12-12v14m3-14v14m3-12v12m3-15v15m-11-9h14m-14 5h14m3-9v14m-3-9h10m-8 5l8-12m-6 2l9 12m3-14v14m-4-9h10m-10 5h10m-8 5l8-14m-7 4l7 10" stroke="#ff00ff" stroke-width="1.3" fill="none"/>';
s += line(4, 633, 1071, 633, '#b8b800', 1.5);
put('volume', s);
axis('volume-axis', [[342, '20000'], [416, '15000'], [488, '10000'], [561, '5000']], [380, 452, 525]);
document.getElementById('volume-axis').innerHTML += rect(1138, 614, 49, 24, 'none', LINE) + text(1141, 626, 'X100', '#a00000') + line(1136, 639, 1212, 639, LINE);

const hist = [741,732,723,714,705,695,689,692,692,692,690,692,695,698,699,699,698,698,698,690,687,686,689,692,695,699,702,696,684,680,683,692,705,716,724,732,737,739,744,754,753,747,741,728,721,716,709,708,708,708,708,709,708,708,711,716,718,714,709,708];
s = grid([674]);
s += poly('8,782 26,779 44,774 62,770 80,764 98,757 116,749 140,747 170,741 188,737 220,733 250,732 290,726 332,720 350,713 385,704 400,702 430,699 476,698 494,691 512,682 530,676 548,673 566,673 590,680 608,687 622,693 640,697 657,702 676,706 690,712 710,722 728,726 757,726 765,728 785,722 805,718 820,716 840,711 870,709 910,707 935,704 985,704 1000,707 1018,710 1045,704 1069,701', '#e0e0e0');
s += poly('8,768 35,771 70,771 98,767 116,762 152,757 200,748 240,742 300,734 350,726 396,717 440,710 480,705 512,700 530,693 560,687 580,684 626,686 655,691 690,697 720,705 750,712 775,715 795,718 850,715 900,710 960,708 1030,707 1071,705', '#d8d800');
hist.forEach((y, i) => { s += line(X(i), 716, X(i), y, y > 716 ? '#00c8c8' : '#d83232', 1.5); });
s += line(0, 716, 1136, 716, '#00d800', 1.5) + arrow(681);
put('macd', s);
axis('macd-axis', [[674, '0.25'], [716, '0.00']], [695]);

s = grid([834, 860, 899, 936, 962]);
s += series([933,924,911,897,877,867,858,866,871,873,869,878,887,896,901,896,879,872,870,858,866,869,872,875,881,890,893,873,861,868,877,890,906,923,932,939,945,950,947,951,942,925,913,887,878,868,860,857,859,861,861,860,862,862,883,907,917,890,890,889], '#e0e0e0');
s += series([941,935,927,917,904,892,881,875,873,873,872,875,879,884,890,891,887,882,878,872,869,869,870,872,875,881,884,881,875,872,875,880,889,900,909,919,929,935,939,944,942,937,929,915,903,890,880,871,868,866,864,863,863,863,869,882,893,892,892,890], '#d8d800');
s += series([920,902,877,857,823,818,817,847,864,873,863,887,903,918,922,903,861,853,854,832,857,867,877,885,893,909,911,860,835,860,883,913,943,969,976,978,980,977,963,970,942,904,877,831,829,820,818,828,839,854,854,854,863,860,908,955,965,885,885,885], '#d800d8');
put('kdj', s + arrow(855));
axis('kdj-axis', [[834, '100.00'], [860, '80.00'], [899, '50.00'], [936, '20.00'], [962, '0.00']], []);

// intraday panel
s = [704, 732, 761, 818, 847, 875, 932, 960, 989].map(y => line(1214, y, 1508, y, LINE, 1.5, '1.5 3')).join('');
s += [1287, 1435].map(x => line(x, 674, x, 1019, LINE, 1.5, '1.5 3')).join('');
s += [674.5, 790, 905, 1019].map((y, i) => line(1214, y, i === 3 ? 1585 : 1508, y, LINE, 1.5)).join('');
s += [1359.5, 1508.5].map(x => line(x, 674, x, 1019, LINE, 1.5)).join('');
const trades = [8,250,10,320,12,290,15,388,20,240,23,0,26,-165,28,-80,30,-110,33,-30,37,-30,40,85,45,85,42,50,48,118,55,75,58,118,62,80,68,150,74,150,77,10,80,10,83,115,88,75,92,118,97,150,99,150,104,200,106,180,108,215,112,180,114,212,117,150,120,215,122,240,126,215,129,250,133,270,136,290,138,320,142,285,150,283,152,248,156,285,158,285,163,320,166,350,168,388,171,290,176,320,180,320,186,320,189,380,192,422,196,385,202,352,206,420,210,430,212,457,216,385,222,355,225,425,234,425,236,400,240,350,242,283,247,283,250,350,256,285,260,320,265,320,268,352,272,370,276,388,280,388,283,370,285,180,288,45,289,215,293,180,298,180,300,45,304,45,306,115,309,78,313,78,315,118,320,180,324,180,327,215,330,215,332,75,336,150,338,215,341,180,345,215,350,215,354,150,358,115,364,115,366,180,370,150,373,115,377,115,379,180,382,215,385,180,388,180,392,215,411,215,414,180,418,215,422,180,426,215,430,180,432,215,434,115,437,180,440,80,448,80,452,45,455,45,457,118,461,80,464,118,466,80,473,80,474,10,476,10,479,-25,483,45,487,10,491,78,496,45,500,10,508,10,513,45,516,80,520,45,525,80,530,80,535,118,540,80,545,118,550,80,555,115,559,80,563,45,567,80,571,45,578,45,582,115,587,80,592,115,597,80,605,80,608,115,625,115,628,150,634,115,637,150,640,110,645,150,649,115,653,218,655,150,658,165];
const average = [8,180,15,225,20,240,25,200,30,150,40,118,65,115,100,112,125,118,150,125,180,145,210,158,240,170,280,175,320,172,360,167,400,168,440,172,500,160,560,157,610,153,658,153];
const path = a => { const p = []; for (let i = 0; i < a.length; i += 2) p.push(`${(1210 + a[i] / 2.208).toFixed(1)},${(740 + a[i + 1] / 3).toFixed(1)}`); return p.join(' '); };
s += poly(path(trades), '#eee', 1.6) + poly(path(average), '#e6e600');
const lead = [105, 20, 28, 18, 14, 22, 26, 16, 20, 44, 18, 14, 12, 8, 9, 6];
for (let i = 0; i < 196; i++) {
  const n = (i * 7919 + i * i * 31) % 97;
  let h = i < 16 ? lead[i] : 1 + (n % 5) + (n > 84 ? 6 : 0);
  if (i === 84) h = 15;
  if (i > 180) h += (i - 180) * (n % 3) * 0.6;
  if (i === 195) h = 24;
  const c = i === 0 || i === 9 ? '#00b400' : i === 195 ? '#eee' : ['#00b400', '#ff3c3c', '#ff3c3c', '#eee', '#00b400'][n % 5];
  s += rect(1214 + i * 1.5, 1018 - h, 1.5, h, c);
}
[[674, '4.72', RED], [703, '4.69', RED], [731, '4.67', RED], [760, '4.64', RED], [788, '4.62', '#eee'], [817, '4.59', '#00b400'], [845, '4.57', '#00b400'], [874, '4.55', '#00b400'],
  [904, '73073', '#b4b400'], [934, '54805', '#b4b400'], [962, '36537', '#b4b400'], [991, '18268', '#b4b400']].forEach(([y, t, c]) => { s += text(1512, y, t, c); });
put('mini', s);

// net profit by first quarter
s = line(1652, 95, 1652, 206, '#333') + line(1652, 206.5, 1893, 206.5, '#333');
s += [[1681, 106], [1761, 134], [1841, 107]].map(([x, y]) => rect(x, y, 22, 204 - y, '#ff4000')).join('');
s += [['1.96', 94], ['1.47', 122], ['0.98', 151], ['0.49', 178], ['0.00', 207]].map(([t, y]) => text(1648, y, t, '#ccc', 'end')).join('');
s += [['202203', 1691], ['202303', 1771], ['202403', 1851]].map(([t, x]) => text(x, 222, t, '#ccc', 'middle')).join('');
put('profit', s + text(1891, 94, '净利润(千万)', '#ccc', 'end'));
```
